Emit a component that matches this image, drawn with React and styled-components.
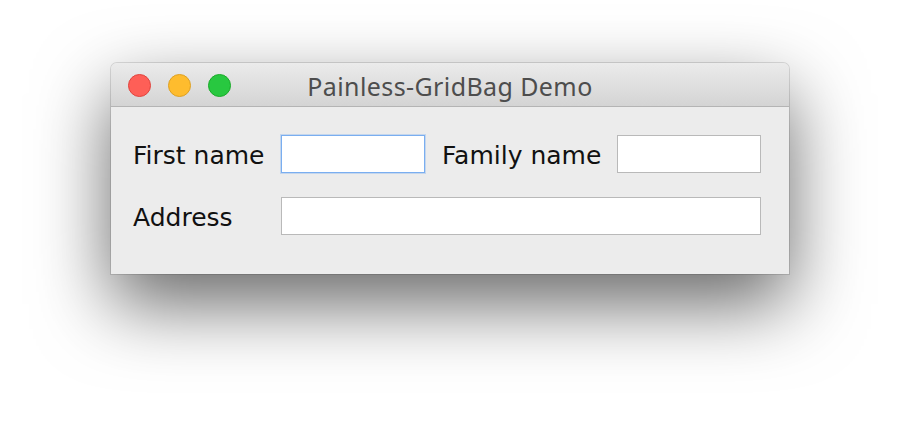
import React from 'react'
import styled, { createGlobalStyle } from 'styled-components'

const GlobalStyle = createGlobalStyle`
  html, body {
    margin: 0;
    padding: 0;
    background: #ffffff;
  }
`

const Desktop = styled.div`
  width: 900px;
  height: 434px;
  padding: 63px 0 0 111px;
  box-sizing: border-box;
  overflow: hidden;
`

const Window = styled.div`
  width: 678px;
  border-radius: 6px 6px 0 0;
  box-shadow: 0 0 0 1px rgba(0, 0, 0, 0.12), 0 30px 75px rgba(0, 0, 0, 0.6);
  overflow: hidden;
  background: #ececec;
`

const TitleBar = styled.div`
  position: relative;
  height: 43px;
  display: flex;
  align-items: center;
  justify-content: center;
  background: linear-gradient(#ebebeb, #d4d4d4);
  border-bottom: 1px solid #b4b4b4;
`

const Lights = styled.div`
  position: absolute;
  left: 17px;
  top: 11px;
  display: flex;
  gap: 17px;
`

const Light = styled.span`
  width: 23px;
  height: 23px;
  border-radius: 50%;
  box-sizing: border-box;
  background: ${p => p.$fill};
  border: 1px solid ${p => p.$edge};
`

const Title = styled.div`
  font-family: "Noto Sans", "Liberation Sans", sans-serif;
  font-size: 25px;
  color: #4d4d4d;
  letter-spacing: 0.4px;
  margin-top: 2px;
`

const Form = styled.div`
  display: grid;
  grid-template-columns: 131px 144px 158px 144px;
  grid-auto-rows: 38px;
  column-gap: 17px;
  row-gap: 24px;
  padding: 28px 28px 39px 22px;
`

const Label = styled.label`
  display: flex;
  align-items: center;
  padding-top: 3px;
  font-family: "DejaVu Sans", "Liberation Sans", sans-serif;
  font-size: 25px;
  color: #111;
  white-space: nowrap;
`

const Field = styled.div`
  grid-column: ${p => p.$span || 'auto'};
  background: #fff;
  box-sizing: border-box;
  border: 1px solid ${p => (p.$focused ? '#7aaef0' : '#b9b9b9')};
  box-shadow: ${p => (p.$focused ? '0 0 0 1px rgba(122, 174, 240, 0.35)' : 'none')};
`

export default function App() {
  return (
    <Desktop>
      <GlobalStyle />
      <Window>
        <TitleBar>
          <Lights>
            <Light $fill="#fe5f57" $edge="#e0443e" />
            <Light $fill="#febc2e" $edge="#dea123" />
            <Light $fill="#28c840" $edge="#1aab29" />
          </Lights>
          <Title>Painless-GridBag Demo</Title>
        </TitleBar>
        <Form>
          <Label>First name</Label>
          <Field $focused />
          <Label>Family name</Label>
          <Field />
          <Label>Address</Label>
          <Field $span="2 / 5" />
        </Form>
      </Window>
    </Desktop>
  )
}
